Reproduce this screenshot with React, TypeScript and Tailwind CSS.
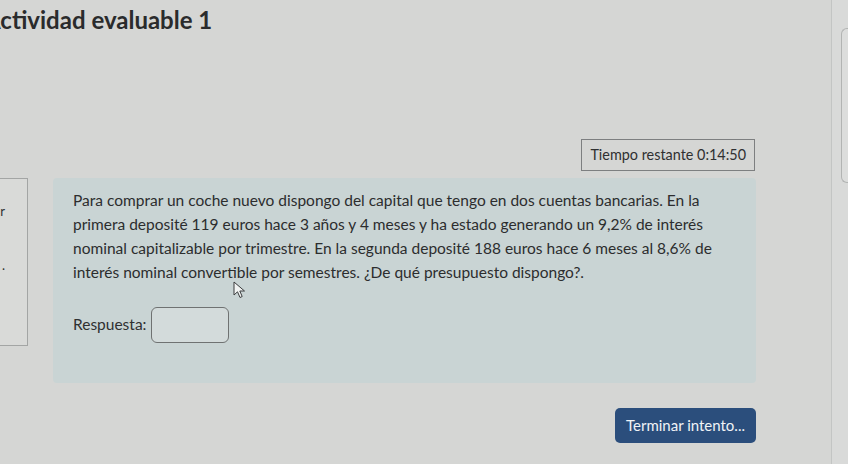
import React from 'react';

export default function App() {
  return (
    <div
      className="relative flex h-[464px] w-[848px] overflow-hidden bg-[#d5d6d4] text-[#2f3031]"
      style={{ fontFamily: 'Lato, "Open Sans", sans-serif' }}
    >
      {/* main page column */}
      <div className="flex w-[831px] flex-col">
        <h1 className="-ml-[16px] mt-[3px] whitespace-nowrap text-[24px] font-bold leading-[34px] text-[#2a2b2c]">
          Actividad evaluable 1
        </h1>

        <div className="mt-[102px] flex justify-end pr-[76px]">
          <div className="border border-[#7d7f80] px-[8px] py-[4px] text-[14.4px] leading-[22px]">
            Tiempo restante 0:14:50
          </div>
        </div>

        <div className="mt-[7px] flex gap-[25px]">
          {/* quiz navigation block, cut at the left edge */}
          <div className="-ml-[100px] flex h-[168px] w-[128px] flex-col items-end border border-[#a3a5a4] bg-[#d9dad8] pr-[22px] pt-[22px] text-[13px]">
            <span className="leading-[20px]">r</span>
            <span className="mt-[34px] leading-[20px]">.</span>
          </div>

          {/* question formulation */}
          <div className="relative h-[205px] w-[703px] rounded-[4px] bg-[#c9d4d4] px-[20px] pt-[10px]">
            <p className="text-[15.5px] leading-[24px] text-[#2c2d2e]">
              Para comprar un coche nuevo dispongo del capital que tengo en dos cuentas bancarias. En la
              <br />
              primera deposité 119 euros hace 3 años y 4 meses y ha estado generando un 9,2% de interés
              <br />
              nominal capitalizable por trimestre. En la segunda deposité 188 euros hace 6 meses al 8,6% de
              <br />
              interés nominal convertible por semestres. ¿De qué presupuesto dispongo?.
            </p>

            <div className="mt-[23px] flex items-center gap-[5px]">
              <span className="text-[15.5px]">Respuesta:</span>
              <div className="h-[36px] w-[78px] rounded-[6px] border border-[#6f7272] bg-[#d3dbdb]" />
            </div>

            {/* mouse pointer */}
            <svg
              className="absolute left-[180px] top-[103px]"
              width="14"
              height="18"
              viewBox="0 0 14 18"
            >
              <path
                d="M1 1 L1 14 L4.5 10.8 L7 16.5 L9.2 15.5 L6.8 10 L11.5 10 Z"
                fill="#f2f4f3"
                stroke="#3b3d3e"
                strokeWidth="1"
                strokeLinejoin="round"
              />
            </svg>
          </div>
        </div>

        <div className="mt-[25px] flex justify-end pr-[75px]">
          <button className="rounded-[5px] bg-[#2b4e7c] px-[11px] py-[6px] text-[15px] leading-[23px] text-[#f1f3f6]">
            Terminar intento...
          </button>
        </div>
      </div>

      {/* right drawer edge */}
      <div className="flex flex-1 border-l border-[#c3c5c4] bg-[#d9dad9] pl-[9px]">
        <div className="mt-[28px] h-[155px] flex-1 rounded-l-[6px] border border-r-0 border-[#b2b4b3] bg-[#dcdddc]" />
      </div>
    </div>
  );
}
